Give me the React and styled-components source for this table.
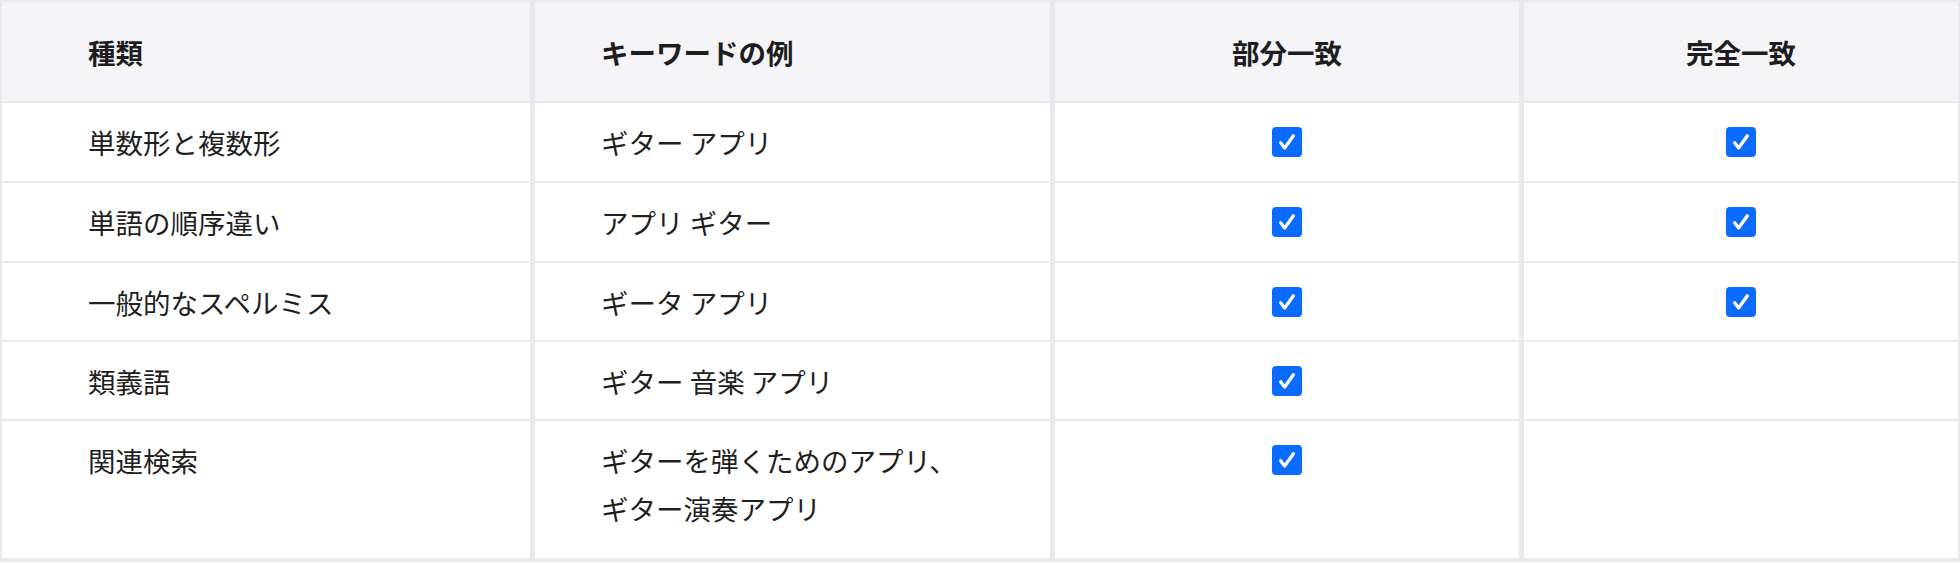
import styled, { createGlobalStyle } from "styled-components";

const GlobalStyle = createGlobalStyle`
  html, body {
    margin: 0;
    padding: 0;
    background: #ffffff;
  }
  body {
    font-family: "Noto Sans CJK JP", "Noto Sans", sans-serif;
    color: #1d1d1f;
  }
`;

const Table = styled.div`
  width: 1960px;
  box-sizing: border-box;
  display: grid;
  grid-template-columns: 528px 515px 464px 434px;
  grid-template-rows: 99px 78px 78px 77px 77px 137px;
  column-gap: 5px;
  row-gap: 2px;
  padding: 2px 2px 4px 2px;
  background: #e8e8ed;
`;

const HeadCell = styled.div`
  background: #f4f4f6;
  display: flex;
  align-items: center;
  justify-content: ${(p) => (p.$center ? "center" : "flex-start")};
  padding-left: ${(p) => (p.$center ? 0 : p.$indent)}px;
  font-size: 27.5px;
  font-weight: 700;
  color: #1d1d1f;
`;

const Cell = styled.div`
  background: #ffffff;
  box-sizing: border-box;
  padding: 15px 0 0 ${(p) => (p.$center ? 0 : p.$indent)}px;
  display: flex;
  flex-direction: column;
  align-items: ${(p) => (p.$center ? "center" : "flex-start")};
  font-size: 27.5px;
  line-height: 48px;
  color: #1f1f1f;
`;

const Line = styled.span`
  display: block;
  white-space: nowrap;
`;

const Check = styled.span`
  display: flex;
  align-items: center;
  height: 48px;
`;

const Box = styled.span`
  width: 30px;
  height: 30px;
  border-radius: 4px;
  background: #0a6cff;
  display: flex;
  align-items: center;
  justify-content: center;
`;

const indents = [86, 66];

const rows = [
  { kind: "単数形と複数形", words: ["ギター アプリ"], partial: true, exact: true },
  { kind: "単語の順序違い", words: ["アプリ ギター"], partial: true, exact: true },
  { kind: "一般的なスペルミス", words: ["ギータ アプリ"], partial: true, exact: true },
  { kind: "類義語", words: ["ギター 音楽 アプリ"], partial: true, exact: false },
  {
    kind: "関連検索",
    words: ["ギターを弾くためのアプリ、", "ギター演奏アプリ"],
    partial: true,
    exact: false,
  },
];

function Checkbox() {
  return (
    <Check>
      <Box>
        <svg width="30" height="30" viewBox="0 0 30 30">
          <path
            d="M8.6 15.8 L12.6 21 L21.4 8.8"
            fill="none"
            stroke="#ffffff"
            strokeWidth="3.2"
            strokeLinecap="round"
            strokeLinejoin="round"
          />
        </svg>
      </Box>
    </Check>
  );
}

export default function App() {
  return (
    <>
      <GlobalStyle />
      <Table>
        <HeadCell $indent={indents[0]}>種類</HeadCell>
        <HeadCell $indent={indents[1]}>キーワードの例</HeadCell>
        <HeadCell $center>部分一致</HeadCell>
        <HeadCell $center>完全一致</HeadCell>

        {rows.map((row, i) => [
          <Cell key={`k${i}`} $indent={indents[0]}>
            <Line>{row.kind}</Line>
          </Cell>,
          <Cell key={`w${i}`} $indent={indents[1]}>
            {row.words.map((w, j) => (
              <Line key={j}>{w}</Line>
            ))}
          </Cell>,
          <Cell key={`p${i}`} $center>
            {row.partial && <Checkbox />}
          </Cell>,
          <Cell key={`e${i}`} $center>
            {row.exact && <Checkbox />}
          </Cell>,
        ])}
      </Table>
    </>
  );
}
